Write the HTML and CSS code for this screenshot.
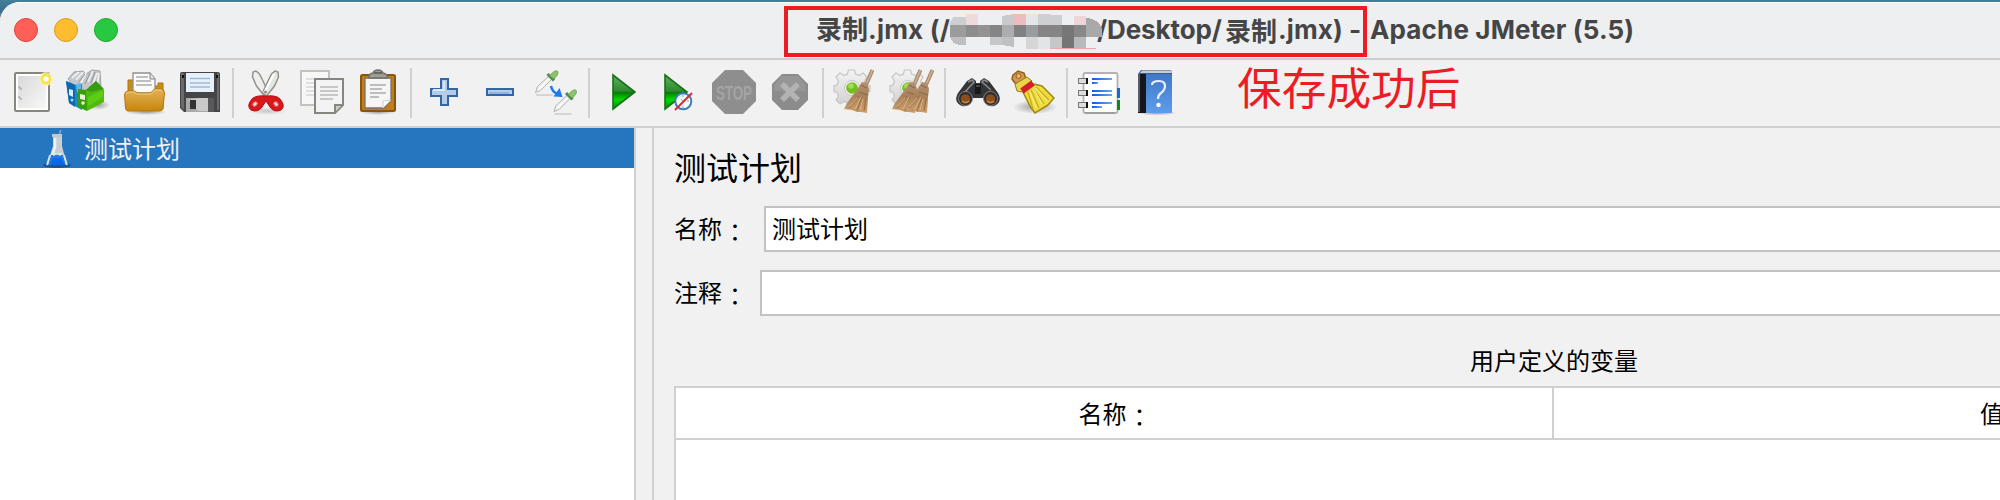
FILE: index.html
```
<!DOCTYPE html>
<html lang="zh-CN">
<head>
<meta charset="utf-8">
<title>Apache JMeter (5.5)</title>
<link rel="stylesheet" href="styles.css">
</head>
<body>
<svg class="defs" width="0" height="0" aria-hidden="true">
  <defs>
    <linearGradient id="paper" x1="0" y1="0" x2="1" y2="1"><stop offset="0" stop-color="#d9d9d9"/><stop offset="1" stop-color="#f8f8f8"/></linearGradient>
    <linearGradient id="folder" x1="0" y1="0" x2="0" y2="1"><stop offset="0" stop-color="#e3b155"/><stop offset="1" stop-color="#c8860c"/></linearGradient>
    <linearGradient id="green" x1="0" y1="0" x2="0" y2="1"><stop offset="0" stop-color="#5fb25f"/><stop offset=".47" stop-color="#2d8a2d"/><stop offset=".52" stop-color="#087a08"/><stop offset=".72" stop-color="#00d800"/><stop offset="1" stop-color="#128a12"/></linearGradient>
    <linearGradient id="blueBook" x1="0" y1="0" x2="0" y2="1"><stop offset="0" stop-color="#3f78c6"/><stop offset="1" stop-color="#5e9deb"/></linearGradient>
    <linearGradient id="line" x1="0" y1="0" x2="1" y2="0"><stop offset="0" stop-color="#0a5ce0"/><stop offset="1" stop-color="#6aa5ee"/></linearGradient>
    <linearGradient id="gearFill" x1="0" y1="0" x2="0" y2="1"><stop offset="0" stop-color="#f4f4f4"/><stop offset="1" stop-color="#cfcfcf"/></linearGradient>
    <linearGradient id="straw" x1="0" y1="0" x2="0" y2="1"><stop offset="0" stop-color="#b39272"/><stop offset=".45" stop-color="#a9815a"/><stop offset="1" stop-color="#cf9f6c"/></linearGradient>
    <radialGradient id="soft"><stop offset="0" stop-color="#000" stop-opacity=".35"/><stop offset="1" stop-color="#000" stop-opacity="0"/></radialGradient>
    <g id="gear">
      <path d="M20.500 6h6l1 4 4 1.500 3.500-2.500 4 4-2.500 4 1.500 4 4 .8v5.500l-4 1-1.500 4 2.500 3.500-4 4-4-2.500-3.500 1.800-1 3.900h-5.500l-1-4-4-1.500-4 2.500-4-4 2.500-4-1.500-3.500-3-1v-5.500l3-1 1.500-4-2.500-4 4-4 4 2.500 3.500-1.500z" fill="url(#gearFill)" stroke="#c6c6c6" stroke-width="1.200"/>
      <circle cx="24" cy="24" r="7.500" fill="#f1f1f1" stroke="#c6c6c6"/>
      <circle cx="24" cy="24" r="5.800" fill="#74c01c"/><circle cx="23" cy="22" r="2.800" fill="#a2dc5a"/>
    </g>
    <g id="besom">
      <path d="M44.500 6L37 23" stroke="#a88767" stroke-width="4"/><path d="M44.500 6L37 23" stroke="#cbb092" stroke-width="1.800"/>
      <path d="M34 18l5 1 2 6-1 8-1 16-6-1-4 0-5-2-8-1 3-6 9-12z" fill="url(#straw)"/>
      <path d="M31 28l9 3M33 21l6 3" stroke="#8b6c4e" stroke-width="1.300"/>
      <path d="M31 32L21 44M34 33l-5 14M38 34l-2 13" stroke="#93693f" stroke-width=".9"/>
      <path d="M29 34l-8 9M35 35l-3 11M33 33l-6 12" stroke="#e0bd93" stroke-width=".8"/>
    </g>
    <g id="dropper">
      <path d="M7.500 28.500l2-6L21 12l3 3-11.500 11.500z" fill="#efefef" stroke="#b4b4b4" stroke-width="1"/>
      <path d="M11 25l10-10" stroke="#fff" stroke-width="1.500"/>
      <path d="M19.500 10l6.500 6.500" stroke="#558a48" stroke-width="3"/>
      <path d="M21.500 11.500l4.500-4q4-2 4 1.500 0 2-4 6z" fill="#8ac46c" stroke="#64a052" stroke-width=".8"/>
      <path d="M8 31h17" stroke="#b4b4b4" stroke-width=".9"/>
    </g>
  </defs>
</svg>

<div class="window">
  <header class="titlebar">
    <div class="lights"><i class="light red"></i><i class="light amber"></i><i class="light lime"></i></div>
    <div class="title">
      <span class="t1"><b class="cjk">录制</b>.jmx (/</span>
      <svg class="mosaic" width="152" height="36" viewBox="0 0 152 36" shape-rendering="crispEdges">
        <path d="M4 4h12v8H0q0-5 4-8z" fill="#cdced0"/><path d="M16 1h12v11H16z" fill="#eedadd"/>
        <path d="M52 3l12-2v11H52z" fill="#c9cacc"/><path d="M64 1h12v11H64z" fill="#edbcc0"/><path d="M76 1h12v11H76z" fill="#e4e5e7"/><path d="M88 1l24 1v10H88z" fill="#cecfd1"/><path d="M124 3h12v9h-12z" fill="#eed5d8"/><path d="M136 5q14 1 16 12v7h-16z" fill="#a9a9a9"/>
        <path d="M0 12h16v12H0z" fill="#9c9c9c"/><path d="M16 12h12v12H16z" fill="#8d8d8e"/><path d="M28 12h12v12H28z" fill="#939393"/><path d="M40 12h12v12H40z" fill="#858585"/><path d="M52 12h12v12H52z" fill="#acadae"/><path d="M64 12h12v12H64z" fill="#818181"/><path d="M76 12h12v12H76z" fill="#9b9c9d"/><path d="M88 12h24v12H88z" fill="#858585"/><path d="M112 12h12v12h-12z" fill="#777"/><path d="M124 12h12v12h-12z" fill="#888"/>
        <path d="M0 24h16v8H10Q2 31 0 24z" fill="#bebfc0"/><path d="M40 24h12v8H40z" fill="#c6c7c8"/><path d="M52 24h12v10l-12-2z" fill="#bfc0c2"/><path d="M76 24h12v12H76z" fill="#d6d6d7"/><path d="M88 24h12v12H88z" fill="#e3e4e6"/><path d="M100 24h12v12h-12z" fill="#c5c6c8"/><path d="M112 24h12v12h-12z" fill="#757575"/><path d="M124 24h12v12h-12z" fill="#b8b9bb"/>
        <path d="M100 35h46v1h-46z" fill="#eda9ad"/>
      </svg>
      <span class="t2">/Desktop/</span>
      <b class="cjk t3">录制</b>
      <span class="t4">.jmx) -</span>
      <span class="t5">Apache JMeter (5.5)</span>
    </div>
    <div class="mark-box"></div>
  </header>

  <nav class="toolbar">
    <svg class="tool" viewBox="0 0 56 56"><rect x="11" y="9" width="34" height="38" rx="1" fill="#fff" stroke="#86887f" stroke-width="2"/><rect x="14" y="12" width="28" height="32" fill="url(#paper)"/><path d="M14 23h2v2h2M14 33h2v2h2" stroke="#999" fill="none"/><circle cx="42" cy="15" r="7" fill="#fbf3a6" opacity=".8"/><circle cx="42" cy="15" r="4" fill="#fffef0" stroke="#f4e246" stroke-width="2.500"/></svg>
    <svg class="tool" viewBox="0 0 56 56"><ellipse cx="38" cy="41" rx="12" ry="5" fill="url(#soft)"/><path d="M8 15l6-7 9-1 3 3 6-4 8 1 1 17-20 8z" fill="#c3c7ca" stroke="#9ba1a5"/><path d="M12 14l7-6M16 16l7-8M21 19l5-10M28 18l5-11M33 20l4-11M37 22l2-13" stroke="#f1f1f1" stroke-width="1.700"/><path d="M19 18l6-8M25 20l5-11M31 19l4-11" stroke="#8f969a"/><path d="M6 17l10 4 6-1v26l-13-7z" fill="#1d87d0"/><path d="M6 17l9 4v22l-6-4z" fill="#0b69ae"/><path d="M16 20l5-1v9h-4z" fill="#63b5ea"/><path d="M9 25l4 1v7l-4-2z" fill="#d7edf9"/><path d="M18 25l9 1v21l-9-4z" fill="#379f0b"/><path d="M26 26l10-9 8 9v12l-17 9z" fill="#4fbb0d"/><path d="M26 26l10-9 8 8-13 3z" fill="#3a9a12"/><path d="M28 33l15-7v7L28 42z" fill="#5ccc14"/><path d="M20 30l5 1v5l-5-1z" fill="#e3f7d4"/><circle cx="23" cy="39" r="1.800" fill="#e7fadb"/><circle cx="12" cy="36" r="1.500" fill="#a7d8f4"/></svg>
    <svg class="tool" viewBox="0 0 56 56"><ellipse cx="30" cy="48" rx="21" ry="3" fill="url(#soft)"/><path d="M12 16h6v6h24v-3h5v26H12z" fill="#c88c17" stroke="#ad7409"/><path d="M17 9h17l5 6v14H17z" fill="#fafafa" stroke="#8f8f8f" stroke-width="1.300"/><path d="M34 9v6h5" fill="#ddd" stroke="#888"/><path d="M20 13h12M20 17h15M20 21h16" stroke="#aaa" stroke-width="1.300"/><path d="M8.500 31q0-4 4-4h6l3 2h13l4-4h6q4 0 4 4l-1.500 15q-.5 3-3 3H12q-2 0-2.500-3z" fill="url(#folder)" stroke="#af7810"/><path d="M10 30q0-2 3-2h5l3 2h14l4-4h7" fill="none" stroke="#f3cf80"/></svg>
    <svg class="tool" viewBox="0 0 56 56"><path d="M10 8h36q2 0 2 2v38H12l-4-4V10q0-2 2-2z" fill="#454547"/><path d="M9 9h3v37l-3-3zM45 9h2v37h-2z" fill="#6b6b6d"/><path d="M10 11h2v3h-2zM44 11h2v3h-2z" fill="#111"/><rect x="14" y="9" width="28" height="19" fill="#e6f0fa"/><path d="M18 14.500h20M18 19h20M18 23h20" stroke="#9fb9d5" stroke-width="1.600"/><path d="M14 34h27v14H14z" fill="#a9a9a9"/><path d="M16 36l10-2h14v13H26z" fill="#c9c9c9"/><rect x="18" y="36" width="6" height="9" fill="#343436"/><path d="M36 34h6v14h-6z" fill="#59595b"/></svg>
    <i class="sep"></i>
    <svg class="tool" viewBox="0 0 56 56"><ellipse cx="29" cy="47" rx="20" ry="4" fill="url(#soft)" opacity=".5"/><path d="M18 7l-3 1-.5 5 4 9 8 10 4-3-5-11-4-8z" fill="#eee" stroke="#92948c" stroke-width="1.500"/><path d="M37 7l3 1 .5 5-4 9-8 10-4-3 5-11 4-8z" fill="#e6e6e4" stroke="#92948c" stroke-width="1.500"/><path d="M36 10l-10 19" stroke="#fff" stroke-width="2"/><circle cx="27.500" cy="28" r="1.500" fill="#888"/><path d="M27 32q-9-1-13 3-6 7-1 11 7 3 11-3l4-6 4 6q4 6 11 3 5-4-1-11-4-4-13-3z" fill="#d8191b" stroke="#b50d10"/><ellipse cx="17" cy="40" rx="2.500" ry="1.800" fill="#f2e4e4" stroke="#ef6565" transform="rotate(-45 17 40)"/><ellipse cx="38" cy="40" rx="2.500" ry="1.800" fill="#f2e4e4" stroke="#ef6565" transform="rotate(45 38 40)"/></svg>
    <svg class="tool" viewBox="0 0 56 56"><rect x="7" y="7" width="28" height="34" fill="#f7f7f7" stroke="#c2c3bf" stroke-width="2"/><path d="M12 15h16M12 19h14M12 23h8M12 27h8M12 31h8" stroke="#d8d8d8" stroke-width="1.500"/><path d="M21 15h28v26l-8 8H21z" fill="#f3f3f3" stroke="#85877f" stroke-width="2"/><path d="M48 41h-7v7" fill="#ccc" stroke="#85877f" stroke-width="2"/><path d="M26 23h18M26 27h18M26 31h18M26 35h13" stroke="#b9b9b9" stroke-width="1.500"/></svg>
    <svg class="tool" viewBox="0 0 56 56"><ellipse cx="28" cy="48" rx="18" ry="3" fill="url(#soft)"/><rect x="11" y="11" width="34" height="36" rx="1.500" fill="#c17d1a" stroke="#885608" stroke-width="2"/><path d="M15 14h26v22l-7 8H15z" fill="#f5f5f5" stroke="#74756f" stroke-width="1.300"/><path d="M41 36l-8 1v7z" fill="#fff" stroke="#ccc"/><path d="M20 21h16M20 25h12M20 29h16M20 33h9" stroke="#aaa" stroke-width="1.500"/><path d="M19 14q-1-4 4-5 1-3 5-3t5 3q5 1 4 5z" fill="#9d9f95" stroke="#6f7169" stroke-width="1.500"/><path d="M24 9h8" stroke="#555" stroke-width="1.500"/></svg>
    <i class="sep"></i>
    <svg class="tool" viewBox="0 0 56 56"><path d="M25 15h7v10h9v7h-9v9h-7v-9H15v-7h10z" fill="#b3cde9" stroke="#3465a4" stroke-width="2"/><path d="M28 17v9H17" fill="none" stroke="#d9e7f6" stroke-width="2"/></svg>
    <svg class="tool" viewBox="0 0 56 56"><rect x="15" y="25" width="26" height="6" fill="#b4cde8" stroke="#3465a4" stroke-width="2"/><path d="M17 29h20" stroke="#94b5db" stroke-width="2"/></svg>
    <svg class="tool" viewBox="0 0 56 56"><use href="#dropper"/><use href="#dropper" x="18.500" y="19"/><path d="M23 22q1 6 7 8" fill="none" stroke="#1d7af2" stroke-width="2.500"/><path d="M31.500 24l3 9-9-.5z" fill="#1d7af2"/></svg>
    <i class="sep"></i>
    <svg class="tool" viewBox="0 0 56 56"><path d="M19 11l22 17-22 17z" fill="url(#green)" stroke="#197019" stroke-width="1.600"/></svg>
    <svg class="tool" viewBox="0 0 56 56"><path d="M15 11l22 17-22 17z" fill="url(#green)" stroke="#197019" stroke-width="1.600"/><circle cx="33.300" cy="37.300" r="8" fill="#f6f8fa" fill-opacity=".92" stroke="#3c7cbe" stroke-width="2"/><path d="M33 31v2M39 37h-2M33 44v-2M31 35l3 3 3-4" stroke="#9aaab8" fill="none"/><path d="M25 46l17-17" stroke="#dc2b2b" stroke-width="2"/></svg>
    <svg class="tool" viewBox="0 0 56 56"><path d="M19 6h18l13 13v18L37 50H19L6 37V19z" fill="#8e8e8e"/><text class="stop" x="10" y="35.500" textLength="36" lengthAdjust="spacingAndGlyphs">STOP</text></svg>
    <svg class="tool" viewBox="0 0 56 56"><path d="M20 10h16l10 10v16L36 46H20L10 36V20z" fill="#8c8c8c"/><path d="M20 12h16l8 9v6H12v-6z" fill="#969696"/><path d="M20 20l16 16M36 20L20 36" stroke="#b3b3b3" stroke-width="5.500"/></svg>
    <i class="sep"></i>
    <svg class="tool" viewBox="0 0 56 56"><use href="#gear"/><use href="#besom"/></svg>
    <svg class="tool" viewBox="0 0 56 56"><use href="#gear"/><use href="#besom" x="-8"/><use href="#besom" x="4"/></svg>
    <i class="sep"></i>
    <svg class="tool" viewBox="0 0 56 56"><path d="M17 17l5-3 4 3v2h4v-2l4-3 5 3 9 12q3 5 1 9-3 5-9 4-5-1-6-8h-12q-1 7-6 8-6 1-9-4-2-4 1-9z" fill="#333436"/><path d="M18 18l4-2 2 2-9 10M38 18l-4-2-2 2 9 8" stroke="#8b8d8f" stroke-width="1.500" fill="none"/><rect x="25" y="20" width="6" height="10" fill="#17191a"/><path d="M26 22h4" stroke="#777"/><circle cx="15.500" cy="34.500" r="7" fill="#292a2c" stroke="#84858a"/><circle cx="40.500" cy="34.500" r="7" fill="#292a2c" stroke="#84858a"/><circle cx="15.500" cy="35" r="4.800" fill="#8c4d1c"/><circle cx="40.500" cy="35" r="4.800" fill="#8c4d1c"/><path d="M12 37q4 3 7 0M37 37q4 3 7 0" stroke="#cf8946" stroke-width="1.500" fill="none"/></svg>
    <svg class="tool" viewBox="0 0 56 56"><ellipse cx="29" cy="43" rx="22" ry="7" fill="url(#soft)"/><path d="M7 11l5-4 6 2 2 6 3 2-6 7-3-4-5-1-3-4z" fill="#d39a4d" stroke="#92611f" stroke-width="1.500"/><circle cx="12.500" cy="12" r="2.500" fill="#e9b66e" stroke="#92611f"/><path d="M9 20l12-7 5 4-10 11-5-1z" fill="#e8d54a" stroke="#957f11"/><path d="M17 28l11-8 8 2 12 12-6 7-13 8-5-7z" fill="#f0dc3f" stroke="#9d8811" stroke-width="1.500"/><path d="M22 28l5 17M25 26l8 18M28 25l10 15M30 23l13 13" stroke="#c5ad1a" stroke-width="1.200"/><path d="M24 28l6 16M28 25l8 15M30 24l11 13" stroke="#fbf29a"/><path d="M16 27l11-8" stroke="#d41f26" stroke-width="6"/></svg>
    <i class="sep"></i>
    <svg class="tool" viewBox="0 0 56 56"><path d="M42 24h6v10h-6z" fill="#1568df"/><path d="M42 36h6v10h-6z" fill="#118814"/><rect x="11.500" y="9" width="34" height="40" rx="2" fill="#fff" stroke="#b2b2b2" stroke-width="1.800"/><path d="M13 49h30" stroke="#999" stroke-width="1.500"/><path d="M45 24h3v10h-3z" fill="#1568df"/><path d="M45 36h3v10h-3z" fill="#118814"/><g fill="#ddd" stroke="#777"><rect x="6.500" y="14.500" width="8" height="5"/><rect x="6.500" y="26.500" width="8" height="5"/><rect x="6.500" y="38.500" width="8" height="5"/></g><path d="M15 14v6M15 26v6M15 38v6" stroke="#111" stroke-width="2"/><g fill="url(#line)"><rect x="20" y="14" width="20" height="2"/><rect x="20" y="18" width="6" height="2"/><rect x="20" y="26" width="20" height="2"/><rect x="20" y="30" width="20" height="2"/><rect x="20" y="38" width="20" height="2"/><rect x="20" y="42" width="10" height="2"/></g></svg>
    <svg class="tool" viewBox="0 0 56 56"><ellipse cx="29" cy="49" rx="20" ry="2.500" fill="url(#soft)"/><path d="M10 10l3-4h30l1 3v40H10z" fill="#3a5f95"/><path d="M12 9l2-2.500h29L44 9z" fill="#c9ccd0"/><rect x="18" y="10" width="26" height="39" fill="url(#blueBook)"/><path d="M10 10h8v39h-8z" fill="#15181c"/><path d="M10 10h2v38h-2z" fill="#585d63"/><path d="M24 21q0-4 7-4 6 0 6 5 0 4-4 7-3 2-3 6" fill="none" stroke="#e7effa" stroke-width="2.200"/><circle cx="30.500" cy="41" r="2.300" fill="#f4f8fd"/></svg>
    <p class="mark-text">保存成功后</p>
  </nav>

  <main class="content">
    <aside class="tree">
      <div class="node">
        <svg class="flask" width="28" height="38" viewBox="0 0 28 38"><ellipse cx="14" cy="35" rx="14" ry="3" fill="#123f72" opacity=".6"/><path d="M17 8V2l1-2" stroke="#88a8c7" stroke-width="1.500" fill="none"/><path d="M10 6h9v10l5 19H4l6-19z" fill="#c9ced3"/><path d="M9 4h10v3H9z" fill="#c4c8cb"/><path d="M12 8v9L8 29" stroke="#f0f0f0" stroke-width="2.500" fill="none"/><path d="M8 25h12l3 10H5z" fill="#277bd3"/><path d="M10 28h8l4 7H7z" fill="#0669e9"/><path d="M8 23l3 3 3-3 3 3 3-3" fill="#dce7f1"/><path d="M7 25L4 35M21 25l3 10" stroke="#d4e2ef" stroke-width="1.800"/></svg>
        <span class="node-name">测试计划</span>
      </div>
    </aside>
    <div class="divider"></div>
    <section class="editor">
      <h1 class="heading">测试计划</h1>
      <div class="row name-row"><label class="label">名称<span class="colon">：</span></label><div class="field">测试计划</div></div>
      <div class="row note-row"><label class="label">注释<span class="colon">：</span></label><div class="field"></div></div>
      <h2 class="caption">用户定义的变量</h2>
      <div class="table">
        <div class="thead"><div class="th">名称<span class="colon">：</span></div><div class="th">值</div></div>
        <div class="tbody"></div>
      </div>
    </section>
  </main>
</div>
</body>
</html>
```
FILE: styles.css
```
* { box-sizing: border-box; }
body {
  margin: 0;
  width: 2000px;
  height: 500px;
  overflow: hidden;
  padding-top: 2px;
  background: linear-gradient(#427f99 0, #386f87 12px, #8fb0bd 20px);
  font-family: "Noto Sans CJK SC", sans-serif;
  font-size: 24px;
  color: #000;
}
.defs { position: absolute; }
.window {
  display: flex;
  flex-direction: column;
  height: 498px;
  background: #f1f1f1;
  border-radius: 20px 0 0 0;
  overflow: hidden;
}
.titlebar {
  position: relative;
  flex: none;
  display: flex;
  align-items: center;
  height: 58px;
  padding: 0 0 2px 14px;
  background: #eeeff1;
  border-top: 1px solid #fff;
  border-bottom: 2px solid #cbcccd;
}
.lights { display: flex; gap: 16px; width: 802px; }
.light { width: 24px; height: 24px; border-radius: 50%; border: 1px solid; }
.red { background: #ff5f57; border-color: #e0443e; }
.amber { background: #febc2e; border-color: #dc9b1d; }
.lime { background: #28c840; border-color: #1aab2c; }
.title {
  display: flex;
  align-items: center;
  height: 40px;
  font: 650 26px/40px Inter, "Noto Sans CJK SC", sans-serif;
  letter-spacing: .2px;
  color: #454546;
  white-space: nowrap;
}
.title .cjk { font-family: "Noto Sans CJK SC", sans-serif; font-weight: 700; font-size: 26px; letter-spacing: 0; line-height: 38px; }
.t1 { width: 134px; }
.mosaic { flex: none; width: 152px; height: 36px; margin-top: 3px; position: relative; z-index: 1; }
.t2 { width: 128px; margin-left: -5px; letter-spacing: -.1px; }
.t3 { width: 53px; }
.t4 { width: 92px; letter-spacing: .1px; }
.t5 { letter-spacing: .15px; }
.mark-box {
  position: absolute;
  left: 784px;
  top: 3px;
  width: 583px;
  height: 51px;
  border: 4px solid #ed1c24;
  z-index: 2;
}
.toolbar {
  position: relative;
  flex: none;
  display: flex;
  align-items: flex-start;
  height: 68px;
  padding: 4px 0 0 4px;
  border-bottom: 2px solid #d0d0d0;
}
.tool { flex: none; width: 56px; height: 56px; }
.stop { font: 700 21px "Liberation Sans", sans-serif; fill: #a4a4a4; }
.sep { flex: none; width: 2px; height: 50px; margin: 4px 4px 0; background: #d0d0d0; }
.mark-text {
  margin: -3px 0 0 53px;
  font-size: 44.700px;
  line-height: 50px;
  color: #ed1c24;
}
.content { flex: 1; display: flex; min-height: 0; }
.tree { flex: none; width: 636px; background: #fff; border-right: 2px solid #d0d0d0; }
.node { display: flex; align-items: center; height: 40px; padding-left: 43px; background: #2675bf; color: #f1f1f1; }
.flask { flex: none; margin-top: 2px; }
.node-name { margin-left: 13px; line-height: 38px; margin-top: -1px; }
.divider { flex: none; width: 18px; border-right: 2px solid #d0d0d0; }
.editor { flex: none; width: 1422px; padding-left: 20px; }
.heading { margin: 14px 0 0; font-size: 32px; font-weight: 400; line-height: 48px; }
.row { display: flex; height: 46px; }
.name-row { margin-top: 16px; }
.note-row { margin-top: 18px; }
.label { line-height: 44px; width: 90px; white-space: nowrap; }
.note-row .label { width: 86px; }
.colon { margin-left: 7px; line-height: 0; vertical-align: -2px; }
.field { flex: 1; border: 2px solid #c2c2c2; background: #fff; padding-left: 6px; line-height: 40px; }
.caption { margin: 26px 0 0; width: 1760px; text-align: center; font-size: 24px; font-weight: 400; line-height: 36px; }
.table { height: 120px; margin-top: 8px; background: #fff; border: 2px solid #d0d0d0; width: 1760px; }
.thead { display: flex; height: 52px; border-bottom: 2px solid #d0d0d0; }
.th { flex: none; width: 878px; text-align: center; line-height: 50px; }
.th:first-child { border-right: 2px solid #d0d0d0; padding-left: 8px; }
.th:last-child { padding-right: 2px; }
```
